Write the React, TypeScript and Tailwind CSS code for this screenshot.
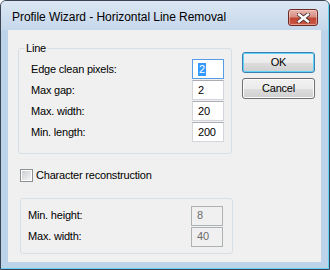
const ui = "font-['Liberation_Sans',Arial,sans-serif]";

const rows = [
  { label: "Edge clean pixels:", value: "2", focused: true },
  { label: "Max gap:", value: "2" },
  { label: "Max. width:", value: "20" },
  { label: "Min. length:", value: "200" },
];

const disabledRows = [
  { label: "Min. height:", value: "8" },
  { label: "Max. width:", value: "40" },
];

function CloseButton() {
  return (
    <div className="mt-[8px] mr-[10px] flex h-[17px] w-[30px] items-center justify-center rounded-[3px] border border-[#6e2a24] bg-[linear-gradient(to_bottom,#e9b5ad_0%,#d88f84_45%,#c24634_55%,#c95a45_100%)] shadow-[inset_0_0_0_1px_rgba(255,220,210,0.5)]">
      <svg width="13" height="10" viewBox="0 0 13 10">
        <path d="M2 1.5 L11 8.5 M11 1.5 L2 8.5" stroke="#4a3030" strokeWidth="4.2" strokeLinecap="square" />
        <path d="M2 1.5 L11 8.5 M11 1.5 L2 8.5" stroke="#ffffff" strokeWidth="2.4" strokeLinecap="square" />
      </svg>
    </div>
  );
}

function Field({ value, focused }: { value: string; focused?: boolean }) {
  return (
    <div
      className={`flex h-[20px] w-[32px] items-center border bg-white pl-[5px] text-[11px] ${
        focused ? "border-[#569de5]" : "border-[#d2d6dc] border-t-[#abadb3]"
      }`}
    >
      {focused ? <span className="bg-[#3399ff] px-[1px] text-white leading-[13px]">{value}</span> : value}
    </div>
  );
}

function Button({ children, isDefault }: { children: string; isDefault?: boolean }) {
  return (
    <div
      className={`flex h-[21px] w-[73px] items-center justify-center rounded-[3px] border text-[11px] bg-[linear-gradient(to_bottom,#f2f2f2_0%,#ebebeb_50%,#dddddd_51%,#cfcfcf_100%)] ${
        isDefault
          ? "border-[#3c7fb1] shadow-[inset_0_0_0_1px_#5fd2f7]"
          : "border-[#707070] shadow-[inset_0_0_0_1px_#fcfcfc]"
      }`}
    >
      {children}
    </div>
  );
}

export default function App() {
  return (
    <div className={`${ui} h-[270px] w-[330px] overflow-hidden rounded-t-[6px] border border-[#3b4450] bg-[#bdd3ea] text-black tracking-[-0.2px]`}>
      <div className="flex h-full flex-col border-b border-r border-[#62d5f2]">
        <div className="flex h-[29px] items-start justify-between bg-[linear-gradient(to_bottom,#dbe6f2,#c6d8ec)]">
          <span className="pl-[11px] pt-[9px] text-[12px] leading-[15px] tracking-[-0.05px]">Profile Wizard - Horizontal Line Removal</span>
          <CloseButton />
        </div>
        <div className="mx-[7px] flex h-[232px] bg-[#f0f0f0]">
          <div className="w-[225px] pt-[18px]">
            <div className="relative ml-[10px] h-[106px] w-[214px] rounded-[3px] border border-[#d5dfe5] pl-[12px] pr-[7px] pt-[10px]">
              <span className="absolute -top-[8px] left-[6px] bg-[#f0f0f0] px-[1px] text-[11px] leading-[14px]">Line</span>
              <div className="flex flex-col gap-[1px]">
                {rows.map((r) => (
                  <div key={r.label} className="flex items-center justify-between text-[11px]">
                    <span>{r.label}</span>
                    <Field value={r.value} focused={r.focused} />
                  </div>
                ))}
              </div>
            </div>
            <div className="ml-[12px] mt-[13px] flex items-center gap-[3px] text-[11px]">
              <div className="h-[13px] w-[13px] border border-[#8e8f8f] bg-white p-[1px]">
                <div className="h-full w-full bg-[linear-gradient(135deg,#cbcfd5,#f4f4f4)]" />
              </div>
              <span>Character reconstruction</span>
            </div>
            <div className="ml-[12px] mt-[14px] flex h-[56px] w-[213px] flex-col gap-[1px] rounded-[3px] border border-[#d5dfe5] pl-[7px] pr-[9px] pt-[7px]">
              {disabledRows.map((r) => (
                <div key={r.label} className="flex items-center justify-between text-[11px]">
                  <span>{r.label}</span>
                  <div className="flex h-[20px] w-[32px] items-center border border-[#adb2b5] bg-[#f0f0f0] pl-[5px] text-[#6d6d6d]">
                    {r.value}
                  </div>
                </div>
              ))}
            </div>
          </div>
          <div className="ml-[9px] flex flex-col gap-[5px] pt-[22px]">
            <Button isDefault>OK</Button>
            <Button>Cancel</Button>
          </div>
        </div>
      </div>
    </div>
  );
}
